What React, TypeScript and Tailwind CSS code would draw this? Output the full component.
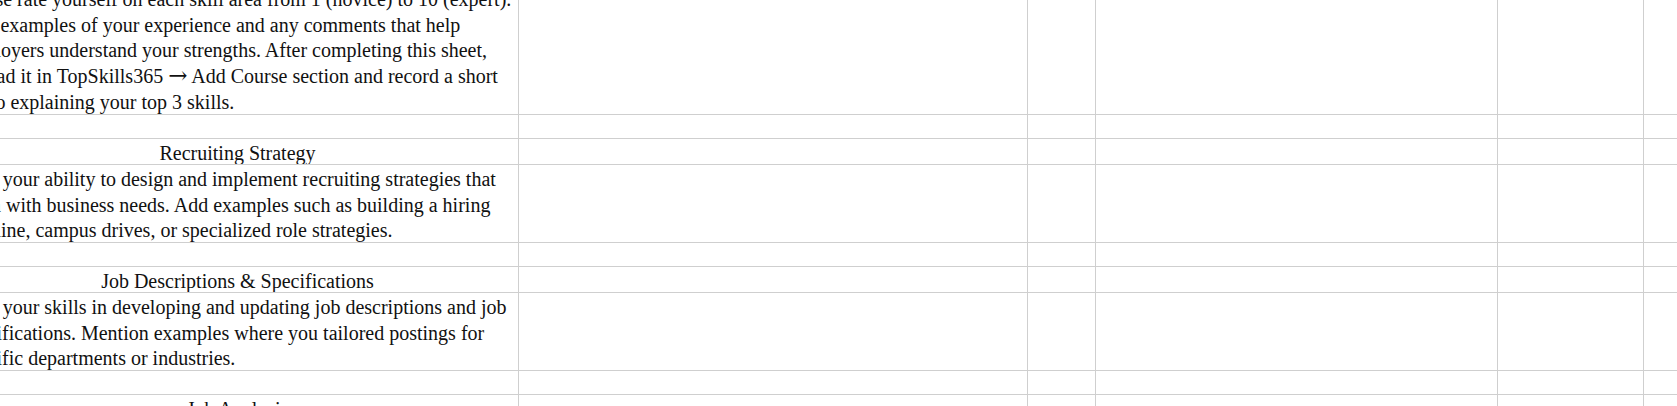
const colWidths = [
  "w-[562px]",
  "w-[509px]",
  "w-[68px]",
  "w-[402px]",
  "w-[146px]",
  "w-[200px]",
];

type Row = { kind: "text" | "title" | "empty" | "intro"; text?: React.ReactNode };

const rows: Row[] = [
  {
    kind: "intro",
    text: (
      <>
        Please rate yourself on each skill area from 1 (novice) to 10 (expert).
        Add examples of your experience and any comments that help employers
        understand your strengths. After completing this sheet, upload it in
        TopSkills365{" "}
        <span className="font-['DejaVu_Serif',serif] text-[23px] leading-none">→</span>{" "}
        Add Course section and record a short video explaining your top 3
        skills.
      </>
    ),
  },
  { kind: "empty" },
  { kind: "title", text: "Recruiting Strategy" },
  {
    kind: "text",
    text: "Rate your ability to design and implement recruiting strategies that align with business needs. Add examples such as building a hiring pipeline, campus drives, or specialized role strategies.",
  },
  { kind: "empty" },
  { kind: "title", text: "Job Descriptions & Specifications" },
  {
    kind: "text",
    text: "Rate your skills in developing and updating job descriptions and job specifications. Mention examples where you tailored postings for specific departments or industries.",
  },
  { kind: "empty" },
  { kind: "title", text: "Job Analysis" },
];

const rowHeight: Record<Row["kind"], string> = {
  intro: "h-[130px]",
  empty: "h-[24px]",
  title: "h-[26px]",
  text: "h-[78px]",
};

function SheetRow({ row }: { row: Row }) {
  return (
    <div className="flex">
      {colWidths.map((w, i) => (
        <div
          key={i}
          className={`${w} ${rowHeight[row.kind]} shrink-0 overflow-hidden border-r border-b border-[#cfcfcf] px-[4px]`}
        >
          {i === 0 && row.text && (
            <div
              className={`pt-[2px] ${row.kind === "title" ? "text-center" : "text-left"}`}
            >
              {row.text}
            </div>
          )}
        </div>
      ))}
    </div>
  );
}

export default function App() {
  return (
    <div className="w-[1677px] h-[406px] overflow-hidden bg-white text-[#111] text-[20px] leading-[25.67px] font-['Liberation_Serif','Times_New_Roman',serif]">
      <div className="-ml-[43px] -mt-[15px]">
        {rows.map((r, i) => (
          <SheetRow key={i} row={r} />
        ))}
      </div>
    </div>
  );
}
